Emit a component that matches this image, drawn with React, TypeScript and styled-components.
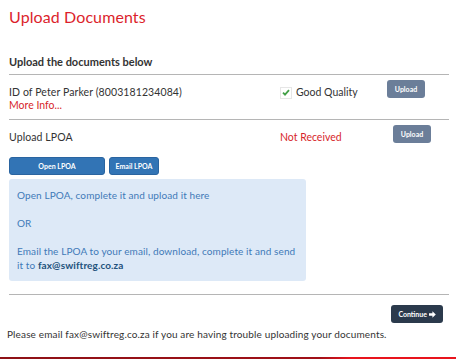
import React from 'react';
import styled, { createGlobalStyle } from 'styled-components';

const GlobalStyle = createGlobalStyle`
  html, body {
    margin: 0;
    padding: 0;
    background: #fff;
  }
  body {
    font-family: Lato, "Noto Sans", sans-serif;
    color: #333;
  }
`;

const Page = styled.div`
  width: 456px;
  height: 359px;
  display: flex;
  flex-direction: column;
  box-sizing: border-box;
  overflow: hidden;
`;

const Content = styled.div`
  padding: 0 7px 0 9px;
  flex: 1;
`;

const Title = styled.h1`
  margin: 6px 0 0;
  font-size: 16px;
  font-weight: 400;
  line-height: 22px;
  letter-spacing: 0.1px;
  color: #dc1f2c;
`;

const Subtitle = styled.h3`
  margin: 26px 0 0;
  font-size: 11px;
  font-weight: 700;
  line-height: 16px;
  color: #333;
`;

const Rule = styled.hr<{ $gap?: number }>`
  border: none;
  border-top: 1px solid #b5b5b5;
  margin: ${p => p.$gap ?? 5}px 0 0;
`;

const DocRow = styled.div<{ $height: number }>`
  display: grid;
  grid-template-columns: 271px 100px 1fr;
  align-items: start;
  padding-top: 10px;
  height: ${p => p.$height}px;
`;

const DocName = styled.div`
  font-size: 10.5px;
  line-height: 13px;
  letter-spacing: 0.1px;
  color: #333;
  padding-top: 1px;
`;

const MoreInfo = styled.a`
  display: block;
  color: #d71f2b;
  font-size: 10.5px;
  line-height: 13px;
  text-decoration: none;
`;

const Status = styled.div<{ $bad?: boolean }>`
  display: flex;
  align-items: center;
  gap: 4px;
  font-size: 10.5px;
  line-height: 13px;
  padding-top: 1px;
  color: ${p => (p.$bad ? '#d71f2b' : '#333')};
`;

const CheckBox = styled.span`
  display: inline-flex;
  align-items: center;
  justify-content: center;
  width: 12px;
  height: 12px;
  border: 1px solid #e6e6e6;
  box-sizing: border-box;
`;

const SmallButton = styled.button<{ $offset?: number }>`
  justify-self: start;
  margin-top: -5px;
  margin-left: ${p => p.$offset ?? 0}px;
  width: 38px;
  height: 18px;
  padding: 0;
  border: none;
  border-radius: 3px;
  background: #6b7e99;
  color: #fff;
  font-family: inherit;
  font-size: 7px;
  font-weight: 700;
`;

const ActionRow = styled.div`
  display: flex;
  gap: 4px;
`;

const BlueButton = styled.button<{ $width: number }>`
  width: ${p => p.$width}px;
  height: 18px;
  padding: 0;
  border: 1px solid #2a64a0;
  border-radius: 3px;
  background: #3274b5;
  color: #fff;
  font-family: inherit;
  font-size: 7px;
  font-weight: 700;
`;

const InfoBox = styled.div`
  width: 297px;
  box-sizing: border-box;
  margin-top: 4px;
  padding: 9px 6px 9px 8px;
  background: #dde9f7;
  border-radius: 3px;
  color: #3f7ab8;
  font-size: 10px;
  line-height: 14px;
  letter-spacing: 0.1px;
`;

const InfoPara = styled.p`
  margin: 0 0 14px;
  &:last-child {
    margin-bottom: 0;
  }
`;

const Strong = styled.b`
  color: #23527c;
`;

const ContinueWrap = styled.div`
  display: flex;
  justify-content: flex-end;
  padding-top: 10px;
  padding-right: 6px;
`;

const ContinueButton = styled.button`
  display: inline-flex;
  align-items: center;
  gap: 2px;
  height: 18px;
  padding: 0 7px;
  border: none;
  border-radius: 3px;
  background: #2b3a4c;
  color: #fff;
  font-family: inherit;
  font-size: 7px;
  font-weight: 700;
`;

const HelpText = styled.p`
  margin: 4px 0 0 -2px;
  font-size: 10px;
  line-height: 14px;
  letter-spacing: 0.14px;
  color: #333;
`;

const BottomBar = styled.div`
  height: 2px;
  background: linear-gradient(to right, #8e1116 0%, #a01018 70%, #e8141d 77%, #e8141d 100%);
`;

const Check = () => (
  <svg width="8" height="7" viewBox="0 0 8 7">
    <path d="M1 3.6 L3 5.6 L7 1.2" fill="none" stroke="#43a047" strokeWidth="1.8" />
  </svg>
);

const Arrow = () => (
  <svg width="7" height="7" viewBox="0 0 7 7">
    <path d="M0 2.3 H3.4 V0.3 L6.8 3.5 L3.4 6.7 V4.7 H0 Z" fill="#fff" />
  </svg>
);

export default function App() {
  return (
    <Page>
      <GlobalStyle />
      <Content>
        <Title>Upload Documents</Title>
        <Subtitle>Upload the documents below</Subtitle>
        <Rule $gap={4} />

        <DocRow $height={34}>
          <div>
            <DocName>ID of Peter Parker (8003181234084)</DocName>
            <MoreInfo>More Info...</MoreInfo>
          </div>
          <Status>
            <CheckBox>
              <Check />
            </CheckBox>
            Good Quality
          </Status>
          <SmallButton $offset={7}>Upload</SmallButton>
        </DocRow>
        <Rule $gap={0} />

        <DocRow $height={27}>
          <DocName>Upload LPOA</DocName>
          <Status $bad>Not Received</Status>
          <SmallButton $offset={13}>Upload</SmallButton>
        </DocRow>

        <ActionRow>
          <BlueButton $width={96}>Open LPOA</BlueButton>
          <BlueButton $width={50}>Email LPOA</BlueButton>
        </ActionRow>

        <InfoBox>
          <InfoPara>Open LPOA, complete it and upload it here</InfoPara>
          <InfoPara>OR</InfoPara>
          <InfoPara>
            Email the LPOA to your email, download, complete it and send
            <br />
            it to <Strong>fax@swiftreg.co.za</Strong>
          </InfoPara>
        </InfoBox>

        <Rule $gap={13} />
        <ContinueWrap>
          <ContinueButton>
            Continue
            <Arrow />
          </ContinueButton>
        </ContinueWrap>
        <HelpText>Please email fax@swiftreg.co.za if you are having trouble uploading your documents.</HelpText>
      </Content>
      <BottomBar />
    </Page>
  );
}
